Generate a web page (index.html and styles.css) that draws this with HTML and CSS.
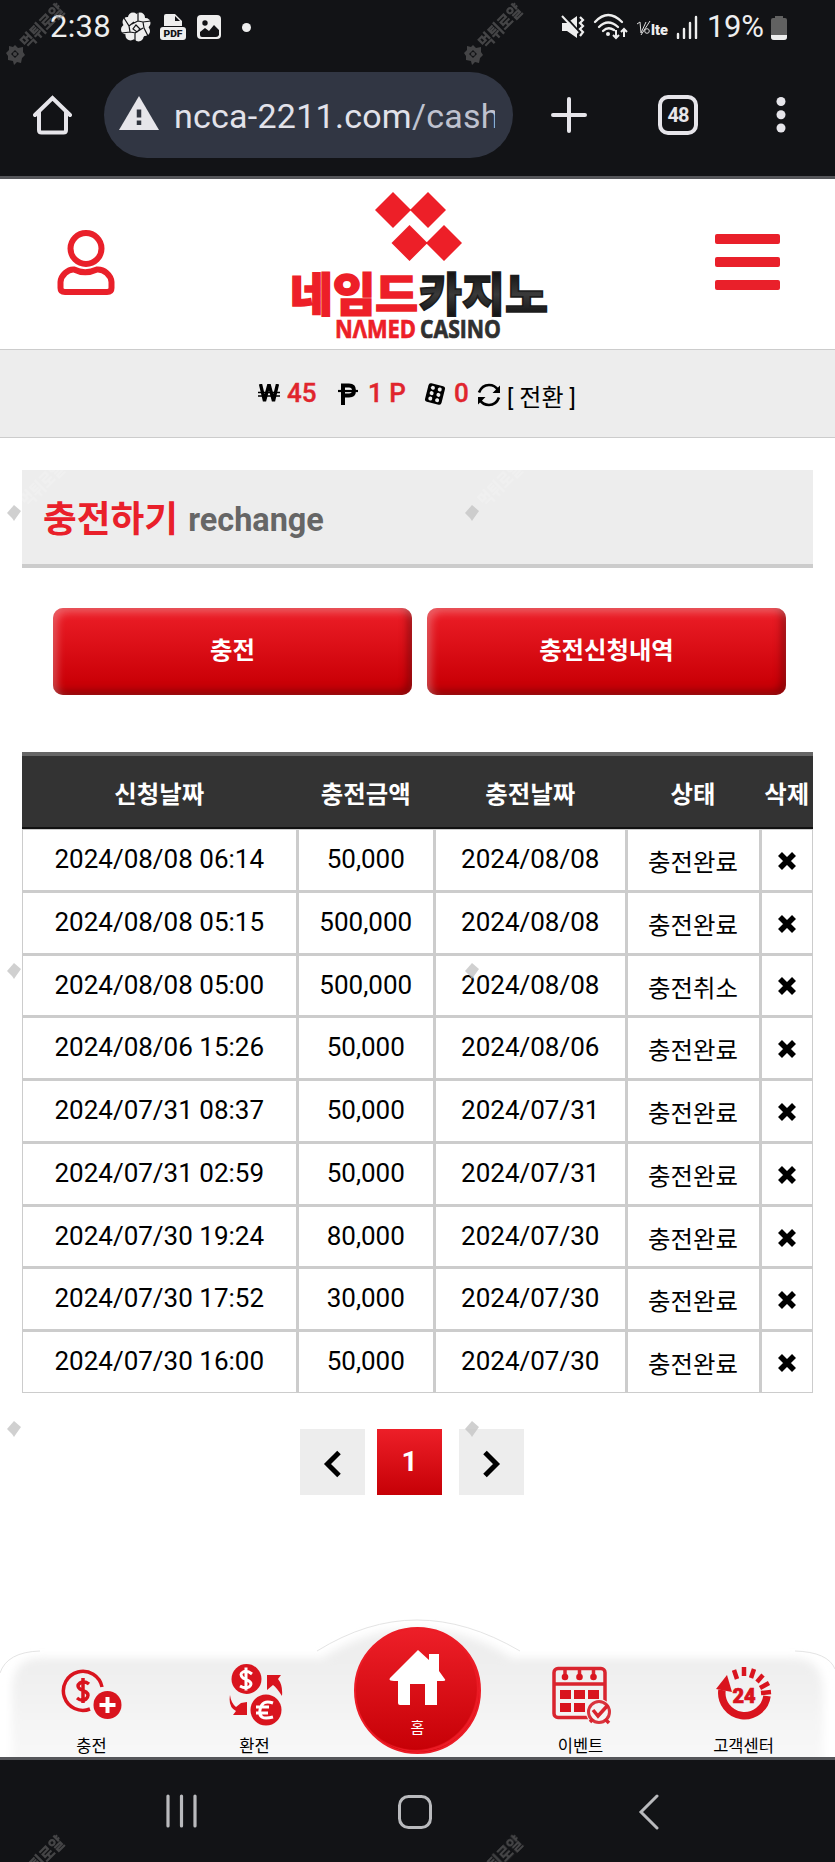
FILE: index.html
```html
<!DOCTYPE html>
<html lang="ko">
<head>
<meta charset="utf-8">
<title>충전하기</title>
<link rel="stylesheet" href="styles.css">
</head>
<body>
<div class="screen">
  <div class="system">
    <div class="status">
      <span class="clock">2:38</span>
      <svg class="st-shutter" width="32" height="30" viewBox="0 0 32 30"><g fill="#eee"><circle cx="16" cy="15" r="12.5"/><circle cx="20" cy="5.5" r="5"/><circle cx="25.500" cy="11" r="5"/><circle cx="25" cy="19" r="5"/><circle cx="18.500" cy="24.500" r="5"/><circle cx="10.500" cy="23.500" r="5"/><circle cx="6" cy="17.500" r="5"/><circle cx="7.500" cy="10" r="5"/><circle cx="13" cy="5.500" r="5"/></g><path d="M18 0v9l-6 3M31 9l-8 1-5-1M28 24l-4-8-1-6M15 30v-9l8-5M2 21l8-1 6 1M4 6l5 8 1 6M9 14l5-4M16 13l4 4-3 3-4-3z" fill="none" stroke="#121316" stroke-width="1.200"/></svg>
      <svg class="st-pdf" width="26" height="28" viewBox="0 0 26 28"><path d="M6 1h9l7 7v5H4V3q0-2 2-2z" fill="#eee"/><path d="M15 3v5h5z" fill="#121316"/><rect x="0" y="14" width="26" height="13" rx="3" fill="#eee"/><text class="pdf" x="13" y="23.500" text-anchor="middle" textLength="19" lengthAdjust="spacingAndGlyphs">PDF</text></svg>
      <svg class="st-img" width="24" height="24" viewBox="0 0 24 24"><rect width="24" height="24" rx="4" fill="#eee"/><circle cx="8" cy="8" r="2.700" fill="#121316"/><path d="M3 20v-3l5-4 4 3 5-6 5 5v5q-1 2-3 2H5q-2 0-2-2z" fill="#121316"/></svg>
      <i class="dot"></i>
      <svg class="st-mute" width="24" height="24" viewBox="0 0 24 24"><path d="M1 8h5l10-7v22l-10-7H1z" fill="#eee"/><path d="M3 0l18 20" stroke="#121316" stroke-width="2"/><path d="M1 1l16 17" stroke="#eee" stroke-width="2"/><path d="M19 2l3 3-3 3 3 3-3 3 3 3-3 4" fill="none" stroke="#eee" stroke-width="2.200"/></svg>
      <svg class="st-wifi" width="36" height="28" viewBox="0 0 36 28"><g fill="none" stroke="#eee" stroke-width="2.300" stroke-linecap="round"><path d="M2 9q13-14 27 0M6 14q9-9 19 0M10 18q5-5 11-1"/></g><circle cx="15" cy="21" r="2" fill="#eee"/><path d="M23 17v8m-3-3l3 3 3-3M31 24v-8m-3 3l3-3 3 3" fill="none" stroke="#eee" stroke-width="2"/></svg>
      <svg class="st-lte" width="34" height="18" viewBox="0 0 34 18"><path d="M1 4l3-2 1 11L10 2M5 15L14 1" fill="none" stroke="#ddd" stroke-width="1"/><circle cx="11" cy="11" r="2.300" fill="none" stroke="#ddd"/><text class="lte" x="15" y="14.500" textLength="17" lengthAdjust="spacingAndGlyphs">lte</text></svg>
      <svg class="st-signal" width="22" height="24" viewBox="0 0 22 24"><path d="M2 19v4M8 14v9M14 8v15M20 2v21" stroke="#eee" stroke-width="2.400" stroke-linecap="round"/></svg>
      <span class="percent">19%</span>
      <svg class="st-bat" width="16" height="25" viewBox="0 0 16 25"><path d="M4 3V1h8v2h2q2 0 2 2v17q0 3-3 3H3q-3 0-3-3V5q0-2 2-2z" fill="#616161"/><path d="M0 20h16v2q0 3-3 3H3q-3 0-3-3z" fill="#eee"/></svg>
    </div>
    <div class="toolbar">
      <svg class="tb-home" width="40" height="40" viewBox="0 0 40 40"><path d="M2 20L19.500 3 37 20M6 17v18q0 2.500 2.500 2.500h22q2.500 0 2.500-2.500V17" fill="none" stroke="#e6e5ea" stroke-width="4" stroke-linecap="round"/></svg>
      <div class="address">
        <svg width="40" height="34" viewBox="0 0 40 34"><path d="M20 0l20 34H0z" fill="#e6e5ea"/><path d="M20 13.500v8M20 24.500v4.500" stroke="#30343f" stroke-width="4.500"/></svg>
        <div class="url">ncca-2211.com<span>/cash</span></div>
      </div>
      <svg class="tb-plus" width="36" height="36" viewBox="0 0 36 36"><path d="M18 2v32M2 18h32" stroke="#e6e5ea" stroke-width="4" stroke-linecap="round"/></svg>
      <div class="tabs">48</div>
      <svg class="tb-more" width="10" height="36" viewBox="0 0 10 36"><g fill="#e6e5ea"><circle cx="5" cy="4.500" r="4.500"/><circle cx="5" cy="17.800" r="4.500"/><circle cx="5" cy="31" r="4.500"/></g></svg>
    </div>
  </div>

  <header class="header">
    <svg class="user" width="58" height="66" viewBox="0 0 58 66"><g fill="none" stroke="#e9202a" stroke-width="6"><circle cx="29" cy="18.500" r="15.500"/><path d="M3.500 58V52C4 45 11 39 17 39.500Q28 45 40 39.500C47 39 54 45 54.500 52V58Q54.500 62 50 62H8Q3.500 62 3.500 58z"/></g></svg>
    <svg class="logo" width="260" height="150" viewBox="0 0 260 150">
      <defs><linearGradient id="ink" x1="0" y1="0" x2="0" y2="1"><stop offset=".2" stop-color="#111"/><stop offset=".55" stop-color="#3a3a3a"/><stop offset=".9" stop-color="#111"/></linearGradient></defs>
      <path d="M106 0l18 18-18 18-18-18zM141 0l18 18-18 18-18-18zM122.500 33l18 18-18 18-18-18zM157 33l18 18-18 18-18-18z" fill="#ed1f28"/>
      <text class="logo-ko red" x="3" y="119" textLength="128" lengthAdjust="spacingAndGlyphs">네임드</text>
      <text class="logo-ko ink" x="132" y="119" textLength="129" lengthAdjust="spacingAndGlyphs">카지노</text>
      <text class="logo-en red" x="48" y="146" textLength="81" lengthAdjust="spacingAndGlyphs">NΛMED</text>
      <text class="logo-en dark" x="133" y="146" textLength="81" lengthAdjust="spacingAndGlyphs">CASINO</text>
    </svg>
    <div class="menu"><i></i><i></i><i></i></div>
  </header>

  <div class="balance">
    <svg class="won" width="22" height="19" viewBox="0 0 22 19"><path d="M2.500 0l4 17 4.500-17 4.500 17 4-17" fill="none" stroke="#000" stroke-width="3.300"/><path d="M0 8.500h22M0 12h22" stroke="#000" stroke-width="1.600"/></svg>
    <b class="n45">45</b>
    <svg class="peso" width="20" height="22" viewBox="0 0 20 22"><path d="M5 22V2.500h6q5 0 5 5t-5 5H5" fill="none" stroke="#000" stroke-width="4"/><path d="M0 8h20" stroke="#000" stroke-width="2.200"/></svg>
    <b class="n1">1 P</b>
    <svg class="dice" width="22" height="22" viewBox="0 0 22 22"><g transform="rotate(14 11 11)"><rect x="2.500" y="1.500" width="17" height="19" rx="2.500"/><g fill="#eee"><circle cx="7.500" cy="5.500" r="2"/><circle cx="14.500" cy="5.500" r="2"/><circle cx="7.500" cy="11" r="2"/><circle cx="14.500" cy="11" r="2"/><circle cx="7.500" cy="16.500" r="2"/><circle cx="14.500" cy="16.500" r="2"/></g></g></svg>
    <b class="n0">0</b>
    <svg class="refresh" width="24" height="24" viewBox="0 0 24 24"><path d="M2 9.500Q5 2 12 2q6 0 9 5M22 14.500Q19 22 12 22q-6 0-9-5" fill="none" stroke="#000" stroke-width="2.700"/><path d="M23 2.500V10h-7.500zM1 21.500V14h7.500z"/></svg>
    <span class="swap">[ 전환 ]</span>
  </div>

  <main class="main">
    <h1 class="title">충전하기 <small>rechange</small></h1>
    <div class="actions"><button>충전</button><button>충전신청내역</button></div>
    <div class="thead cols"><span>신청날짜</span><span>충전금액</span><span>충전날짜</span><span>상태</span><span>삭제</span></div>
    <div class="tbody cols" id="rows"></div>
    <div class="pager">
      <span><svg width="19" height="28" viewBox="0 0 19 28"><path d="M16 2.500L4.500 14 16 25.500" fill="none" stroke="#000" stroke-width="5"/></svg></span>
      <span class="current">1</span>
      <span><svg width="19" height="28" viewBox="0 0 19 28"><path d="M3 2.500L14.500 14 3 25.500" fill="none" stroke="#000" stroke-width="5"/></svg></span>
    </div>
  </main>

  <nav class="dock">
    <svg class="dock-bg" width="835" height="140" viewBox="0 0 835 140">
      <defs><linearGradient id="g" x1="0" y1="0" x2="0" y2="1"><stop offset=".2" stop-color="#eee"/><stop offset="1" stop-color="#f9f9f9"/></linearGradient><filter id="soft"><feGaussianBlur stdDeviation="4"/></filter></defs>
      <path d="M12 150V70Q14 41 40 41H322Q365 12 417 12T512 41H795Q821 42 823 70V150z" fill="url(#g)" filter="url(#soft)"/>
      <path d="M0 56Q7 35 40 34M317 34Q367 3 417 3T520 34M795 34Q828 35 835 52" fill="none" stroke="#e4e4e4"/>
    </svg>
    <a>
      <svg class="ic" width="62" height="62" viewBox="0 0 62 62"><g fill="none" stroke="#d9141e"><path d="M41 23A19.500 19.500 0 1 0 29 45" stroke-width="3.500" /><path d="M28 20q-5-4-9-1t0 6l6 3q4 3 0 7-4 3-9-1M22 14v25" stroke-width="3.500"/></g><circle cx="46.500" cy="41" r="14" fill="#d9141e"/><path d="M46.500 33v16M38.500 41h16" stroke="#fff" stroke-width="4"/></svg>
      <span>충전</span>
    </a>
    <a>
      <svg class="ic" width="62" height="62" viewBox="0 0 62 62"><circle cx="22.500" cy="15" r="15" fill="#d9141e"/><circle cx="42" cy="46" r="15.500" fill="#d9141e"/><path d="M28 10q-5-4-9-2t0 6l6 3q4 3 0 6-4 2-9-1M22 3.500v23M49 39q-11-4-13 7t13 7M32 43h13M32 49h12" fill="none" stroke="#fff" stroke-width="3"/><path d="M43 11h14l-3 4q5 6 4 17-5-8-9-11l-6 5zM6 31q1 8 6 12l5-4 6-1v13H9l3-4Q4 43 6 31z" fill="#d9141e"/></svg>
      <span>환전</span>
    </a>
    <a class="home">
      <svg width="58" height="56" viewBox="0 0 58 56"><path d="M29 0L1 28q-2 3 4 3h4v22q0 2 2 2h10V34h15v21h12V31h6q4 0 1-3l-5-7V4H40v6z" fill="#fff"/></svg>
      <span>홈</span>
    </a>
    <a>
      <svg class="ic" width="62" height="62" viewBox="0 0 62 62"><g fill="none" stroke="#d9242e" stroke-width="3.500"><rect x="4" y="4.500" width="51" height="49" rx="4"/><path d="M4 20h51M15 6v7M29.500 6v7M43.500 6v7"/></g><g fill="#d9141e"><circle cx="15" cy="13" r="3.300"/><circle cx="29.500" cy="13" r="3.300"/><circle cx="43.500" cy="13" r="3.300"/><rect x="10" y="26" width="11" height="9"/><rect x="24" y="26" width="11" height="9"/><rect x="38" y="26" width="11" height="9"/><rect x="10" y="39" width="11" height="9"/><rect x="24" y="39" width="11" height="9"/></g><circle cx="49" cy="48" r="13" fill="#f4f4f4"/><circle cx="49" cy="48" r="10.500" fill="none" stroke="#d9343d" stroke-width="3"/><path d="M43 46l5 6 10-11M40 58l3-3M59 59l-4-4" fill="none" stroke="#d9242e" stroke-width="3.500"/></svg>
      <span>이벤트</span>
    </a>
    <a>
      <svg class="ic" width="62" height="62" viewBox="0 0 62 62"><path d="M9 26A22.500 22.500 0 1 0 54 32" fill="none" stroke="#d9141e" stroke-width="7.500"/><path d="M3 25L14 11l5 17z" fill="#d9141e"/><path d="M21 6l3 9M31 3v9M41 5l-3 9M50 11l-6 7M56 19l-9 5M58 28l-10 1" stroke="#d9141e" stroke-width="4.500"/><text class="n24" x="31" y="39" text-anchor="middle">24</text></svg>
      <span>고객센터</span>
    </a>
  </nav>

  <div class="android">
    <svg width="32" height="34" viewBox="0 0 32 34"><path d="M2 2v30M15.500 2v30M29 2v30" stroke="#b9babd" stroke-width="3.200" stroke-linecap="round"/></svg>
    <svg width="36" height="36" viewBox="0 0 36 36"><rect x="2.500" y="2.500" width="31" height="31" rx="9" fill="none" stroke="#b9babd" stroke-width="3"/></svg>
    <svg width="22" height="36" viewBox="0 0 22 36"><path d="M19 2L3 18l16 16" fill="none" stroke="#b9babd" stroke-width="3" stroke-linecap="round"/></svg>
  </div>

  <svg class="marks" width="835" height="1862" viewBox="0 0 835 1862">
    <defs>
      <g id="mark"><path fill-rule="evenodd" d="M0-9l3 3 5-1v5l2 3-3 3-1 5-4-1-3 3-1-4-5-1v-4l-2-3 3-3v-4l4 1zM0-4l-4 4 4 4 4-4z"/><circle r="2"/><text class="mk" x="12" y="6" transform="rotate(-45)" textLength="54" lengthAdjust="spacingAndGlyphs">먹튀로얄</text></g>
      <path id="gem" d="M0-7l7 6-5 7-2 3-2-3-5-5z"/>
      <text id="pale" class="mk" x="12" y="6" transform="rotate(-45)" textLength="54" lengthAdjust="spacingAndGlyphs">먹튀로얄</text>
    </defs>
    <g fill="#777" opacity=".5"><use href="#mark" x="15" y="54"/><use href="#mark" x="473" y="54"/><use href="#mark" x="15" y="1886"/><use href="#mark" x="473" y="1886"/></g>
    <g fill="#c5c5c5" opacity=".8"><use href="#gem" x="14" y="512"/><use href="#gem" x="472" y="512"/><use href="#gem" x="14" y="970"/><use href="#gem" x="472" y="970"/><use href="#gem" x="14" y="1428"/><use href="#gem" x="472" y="1428"/></g>
    <g fill="#fff" opacity=".2"><use href="#pale" x="15" y="512"/><use href="#pale" x="473" y="512"/></g>
  </svg>
</div>
<script src="rows.js"></script>
</body>
</html>
```
FILE: rows.js
```js
const rows = [
  ["2024/08/08 06:14", "50,000", "충전완료"],
  ["2024/08/08 05:15", "500,000", "충전완료"],
  ["2024/08/08 05:00", "500,000", "충전취소"],
  ["2024/08/06 15:26", "50,000", "충전완료"],
  ["2024/07/31 08:37", "50,000", "충전완료"],
  ["2024/07/31 02:59", "50,000", "충전완료"],
  ["2024/07/30 19:24", "80,000", "충전완료"],
  ["2024/07/30 17:52", "30,000", "충전완료"],
  ["2024/07/30 16:00", "50,000", "충전완료"]
];
const cross = '<svg width="18" height="18" viewBox="0 0 18 18"><path d="M2 2l14 14M16 2L2 16" stroke="#000" stroke-width="5.600"/></svg>';
document.getElementById("rows").innerHTML = rows.map(([date, amount, state]) =>
  `<span>${date}</span><span>${amount}</span><span>${date.slice(0, 10)}</span><span class="state">${state}</span><span class="del">${cross}</span>`
).join("");
```
FILE: styles.css
```css
* { box-sizing: border-box; }
body { margin: 0; background: #fff; font-family: Roboto, "Noto Sans CJK KR", sans-serif; color: #000; }
svg { display: block; flex: none; }
.screen { position: relative; width: 835px; height: 1862px; overflow: hidden; display: flex; flex-direction: column; }
.system { height: 179px; flex: none; background: #121316; border-bottom: 3px solid #55565a; }

.status { height: 72px; padding: 0 49px 18px 50px; display: flex; align-items: center; color: #eee; }
.clock { font-size: 31px; line-height: 54px; width: 60px; letter-spacing: .3px; white-space: nowrap; }
.st-shutter { margin-left: 10px; }
.st-pdf { margin-left: 8px; }
.pdf { font: 900 9px Roboto, sans-serif; fill: #121316; }
.st-img { margin-left: 11px; }
.dot { width: 9px; height: 9px; border-radius: 50%; background: #eee; margin-left: 21px; }
.st-mute { margin-left: auto; }
.st-wifi { margin-left: 8px; }
.st-lte { margin-left: 5px; margin-top: 4px; }
.lte { font: 900 14px Roboto, sans-serif; fill: #eee; }
.st-signal { margin-left: 6px; }
.percent { font-size: 31px; line-height: 54px; letter-spacing: -.3px; width: 60px; margin-left: 9px; margin-right: 4px; white-space: nowrap; }
.st-bat { margin-right: -1px; }
.status .st-mute, .status .st-wifi { transform: translateX(-2px); }

.toolbar { display: flex; align-items: center; height: 86px; padding-left: 33px; }
.address { width: 409px; height: 86px; margin-left: 31px; padding: 0 17px 0 15px; border-radius: 43px; background: #313643; display: flex; align-items: center; }
.address svg { margin-bottom: 4px; }
.url { margin-left: 15px; width: 321px; overflow: hidden; white-space: nowrap; font-size: 34px; line-height: 50px; padding-top: 1px; color: #e2e2ea; letter-spacing: .25px; }
.url span { color: #bfc2cf; }
.tb-plus { margin-left: 38px; }
.tabs { width: 40px; height: 40px; margin-left: 71px; border: 4px solid #e6e5ea; border-radius: 10px; color: #e6e5ea; font: 700 20px/32px Roboto, sans-serif; text-align: center; letter-spacing: -1px; }
.tb-more { margin-left: 78px; }

.header { height: 170px; flex: none; display: flex; align-items: flex-start; padding-left: 57px; }
.user { margin-top: 51px; }
.logo { margin: 13px 0 0 172px; overflow: visible; }
.logo-ko { font: 900 46px "Noto Sans CJK KR", sans-serif; stroke-width: 1.600px; }
.logo-en { font: 700 25px "Open Sans", sans-serif; stroke-width: .7px; }
.red { fill: #ed1f28; stroke: #ed1f28; }
.ink { fill: url(#ink); stroke: #1c1c1c; }
.dark { fill: #303030; stroke: #303030; }
.menu { width: 65px; margin: 55px 0 0 168px; display: grid; gap: 13px; }
.menu i { height: 10px; border-radius: 2px; background: #e9202a; }

.balance { height: 89px; flex: none; background: #ededed; border: solid #ccc; border-width: 1px 0; display: flex; align-items: flex-start; padding: 34px 0 0 258px; }
.balance b { font-size: 26px; line-height: 30px; margin-top: -6px; color: #e0252d; font-weight: 500; -webkit-text-stroke: .4px #e0252d; white-space: pre; }
.n45 { margin-left: 7px; width: 51px; }
.n1 { margin-left: 10px; width: 56px; }
.n0 { margin-left: 8px; width: 23px; }
.peso, .dice, .refresh { margin-top: -1px; }
.swap { margin: -3px 0 0 6px; font-size: 24px; line-height: 34px; white-space: nowrap; }

.main { padding: 32px 22px 0; flex: 1; }
.title { margin: 0; height: 98px; background: #ededed; border-bottom: 4px solid #ccc; padding-left: 21px; font: 700 36.700px/92px "Noto Sans CJK KR", sans-serif; color: #e9202a; white-space: nowrap; }
.title small { font: 700 32.400px Roboto, sans-serif; color: #666; position: relative; top: -1px; }
.actions { display: flex; gap: 15px; padding: 40px 27px 57px 31px; }
.actions button { flex: 1; height: 87px; padding: 0 0 7px; border: 0; border-radius: 10px; color: #fff; font: 700 24.400px "Noto Sans CJK KR", sans-serif; background: linear-gradient(#ed1f28, #cb0007 85%); box-shadow: inset 4px 4px 8px rgba(255,255,255,.3), inset -4px -4px 8px rgba(70,0,0,.5); }
.cols { display: grid; grid-template-columns: 272.5px 134.5px 188.5px 131px 50.5px; column-gap: 3px; text-align: center; }
.thead { height: 77px; background: #333; border-top: 4px solid #666; border-bottom: 2px solid #111; padding: 4px 1px 0; color: #fff; font: 700 24.400px/66px "Noto Sans CJK KR", sans-serif; white-space: nowrap; }
.tbody { height: 564px; background: #ccc; padding: 1px; row-gap: 3px; grid-auto-rows: 1fr; font-size: 26px; line-height: 59px; white-space: nowrap; }
.tbody span { background: #fff; min-height: 0; overflow: hidden; }
.tbody .state { font: 400 24.400px/61px "Noto Sans CJK KR", sans-serif; }
.tbody .del { display: grid; place-items: center; padding-top: 2px; }
.pager { display: flex; padding: 36px 0 0 278px; }
.pager span { width: 65px; height: 66px; background: #ededed; display: grid; place-items: center; padding-top: 4px; }
.pager .current { margin: 0 17px 0 12px; color: #fff; background: linear-gradient(#ed1f28, #c60006); font: 700 28px Roboto, sans-serif; padding: 0 0 1px; }

.dock { position: relative; height: 140px; flex: none; padding: 0 10px; display: grid; grid-template-columns: repeat(5, 163px); }
.dock-bg { position: absolute; left: 0; top: 0; }
.dock a { position: relative; display: flex; flex-direction: column; align-items: center; padding-top: 47px; font: 400 16.500px/22px "Noto Sans CJK KR", sans-serif; }
.dock a > span { margin-top: 8px; white-space: nowrap; }
.dock .home { width: 127px; height: 127px; justify-self: center; margin-top: 10px; padding-top: 21px; color: #fff; border-radius: 50%; background: linear-gradient(#ed1f28, #c60006); border: 2px solid #ec1c26; box-shadow: inset -2px -2px 1px #ec1c26; font-size: 15px; }
.dock .home span { margin-top: 10px; }
.n24 { font: 900 20px Roboto, sans-serif; fill: #d9141e; stroke: #d9141e; stroke-width: .7px; }

.android { height: 105px; flex: none; background: #121316; border-top: 3px solid #55565a; display: flex; align-items: flex-start; padding: 34px 0 0 166px; }
.android svg:nth-child(2) { margin-left: 199px; }
.android svg:nth-child(3) { margin-left: 205px; }
.marks { position: absolute; left: 0; top: 0; pointer-events: none; }
.mk { font: 900 17px "Noto Sans CJK KR", sans-serif; }
```
